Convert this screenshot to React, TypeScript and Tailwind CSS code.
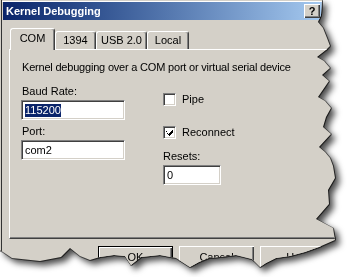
import React from 'react'

const font = "font-['Liberation_Sans',Arial,sans-serif]"

const sunken =
  'bg-white border border-t-[#808080] border-l-[#808080] border-b-white border-r-white shadow-[inset_1px_1px_0_#404040,inset_-1px_-1px_0_#d4d0c8]'

const Check: React.FC<{ checked?: boolean; label: string }> = ({ checked, label }) => (
  <div className="flex h-[13px] items-center gap-[6px]">
    <div className={`flex h-[13px] w-[13px] items-center justify-center ${sunken}`}>
      {checked && (
        <svg width="7" height="7" viewBox="0 0 7 7" shapeRendering="crispEdges">
          <path d="M0 2h1v3h1v1h1v1h1v-1h1v-1h1v-1h1v-3h-1v1h-1v1h-1v1h-1v1h-1v-1h-1v-1h-1z" fill="#000" />
        </svg>
      )}
    </div>
    <span className="text-[11px] leading-[13px]">{label}</span>
  </div>
)

const Field: React.FC<{ value: string; selected?: boolean; w: string }> = ({ value, selected, w }) => (
  <div className={`flex h-[20px] items-center px-[3px] ${w} ${sunken}`}>
    <span
      className={`text-[11px] leading-[13px] ${selected ? 'bg-[#0a246a] text-white' : 'text-black'}`}
    >
      {value}
    </span>
  </div>
)

const Tab: React.FC<{ label: string; w: string; active?: boolean }> = ({ label, w, active }) => (
  <div
    className={`flex items-start justify-center rounded-t-[3px] border-t border-l border-r border-t-white border-l-white border-r-[#404040] bg-[#d4d0c8] shadow-[inset_-1px_0_0_#808080] text-[11px] leading-[13px] ${w} ${
      active ? 'relative z-10 -mb-px h-[22px] pt-[3px]' : 'h-[18px] pt-[2px]'
    }`}
  >
    {label}
  </div>
)

const Button: React.FC<{ label: string; isDefault?: boolean }> = ({ label, isDefault }) => (
  <div
    className={`flex h-[23px] w-[75px] items-center justify-center bg-[#d4d0c8] text-[11px] ${
      isDefault
        ? 'border border-black shadow-[inset_1px_1px_0_#fff,inset_-1px_-1px_0_#404040,inset_-2px_-2px_0_#808080]'
        : 'shadow-[inset_1px_1px_0_#fff,inset_-1px_-1px_0_#404040,inset_-2px_-2px_0_#808080]'
    }`}
  >
    {label}
  </div>
)

const App: React.FC = () => {
  return (
    <div className={`h-[277px] w-[347px] overflow-hidden bg-white text-black ${font}`}>
      <div className="[filter:drop-shadow(4px_4px_3px_rgba(0,0,0,0.7))]">
        <div className="[filter:drop-shadow(1px_0_0_rgba(0,0,0,0.55))_drop-shadow(0_1px_0_rgba(0,0,0,0.55))]">
          <div className="h-[270px] w-[340px] bg-[#d4d0c8] pt-[2px] shadow-[inset_1px_0_0_#d4d0c8,inset_2px_0_0_#333,inset_0_1px_0_#d4d0c8,inset_0_2px_0_#fff] [clip-path:polygon(0_0,322px_0,321px_15px,318px_22px,323px_28px,327px_38px,330px_46px,326px_50px,317px_57px,324px_61px,330px_68px,322px_75px,329px_81px,318px_97px,325px_101px,331px_108px,326px_117px,323px_127px,331px_134px,319px_147px,325px_152px,330px_158px,333px_166px,335px_178px,328px_190px,329px_204px,316px_219px,333px_228px,335px_240px,319px_247px,305px_252px,290px_256px,276px_258px,266px_263px,260px_267px,252px_259px,236px_255px,220px_257px,209px_258px,199px_262px,190px_267px,176px_258px,160px_255px,141px_257px,131px_265px,125px_256px,114px_255px,100px_257px,90px_260px,80px_256px,70px_248px,61px_257px,40px_261px,12px_258px,0_250px)]">
            {/* title bar */}
            <div className="ml-[3px] flex h-[18px] w-[320px] items-center justify-between bg-gradient-to-r from-[#0a246a] to-[#a6caf0] pl-[3px] pr-[3px]">
              <span className="text-[11px] font-bold leading-[13px] text-white">Kernel Debugging</span>
              <div className="flex h-[14px] w-[16px] items-center justify-center bg-[#d4d0c8] text-[11px] font-bold leading-none shadow-[inset_1px_1px_0_#fff,inset_-1px_-1px_0_#404040,inset_-2px_-2px_0_#808080]">
                ?
              </div>
            </div>

            {/* tabs */}
            <div className="mt-[8px] flex h-[21px] items-end pl-[10px]">
              <Tab label="COM" w="w-[45px]" active />
              <Tab label="1394" w="w-[41px]" />
              <Tab label="USB 2.0" w="w-[51px]" />
              <Tab label="Local" w="w-[42px]" />
            </div>

            {/* panel */}
            <div className="ml-[9px] h-[190px] w-[331px] border-t border-l border-b border-t-white border-l-white border-b-[#404040] pl-[11px] pt-[11px] shadow-[inset_0_-1px_0_#808080]">
              <div className="pl-px text-[11px] leading-[13px] tracking-[-0.2px]">
                Kernel debugging over a COM port or virtual serial device
              </div>
              <div className="mt-[11px] flex gap-[38px]">
                <div className="flex w-[104px] flex-col">
                  <span className="mb-[2px] pl-px text-[11px] leading-[13px]">Baud Rate:</span>
                  <Field value="115200" selected w="w-[104px]" />
                  <span className="mb-[2px] mt-[5px] pl-px text-[11px] leading-[13px]">Port:</span>
                  <Field value="com2" w="w-[104px]" />
                </div>
                <div className="flex flex-col pt-[8px]">
                  <Check label="Pipe" />
                  <div className="mt-[20px]">
                    <Check label="Reconnect" checked />
                  </div>
                  <span className="mb-[2px] mt-[11px] text-[11px] leading-[13px]">Resets:</span>
                  <Field value="0" w="w-[58px]" />
                </div>
              </div>
            </div>

            {/* buttons */}
            <div className="ml-[98px] mt-[7px] flex gap-[6px]">
              <Button label="OK" isDefault />
              <Button label="Cancel" />
              <Button label="Help" />
            </div>
          </div>
        </div>
      </div>
    </div>
  )
}

export default App
